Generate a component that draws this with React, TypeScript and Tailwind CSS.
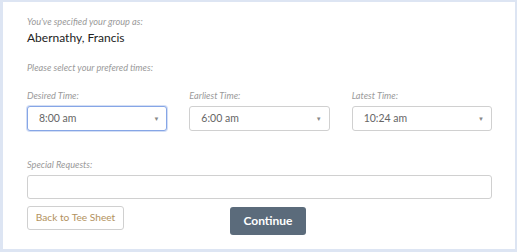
const times = [
  { label: "Desired Time:", value: "8:00 am", focused: true },
  { label: "Earliest Time:", value: "6:00 am", focused: false },
  { label: "Latest Time:", value: "10:24 am", focused: false },
];

function Label({ children }: { children: React.ReactNode }) {
  return <div className="text-[9.2px] italic leading-[12px] text-[#9a9a9a]">{children}</div>;
}

export default function App() {
  return (
    <div
      className="h-[252px] w-[517px] bg-[#dde5f3] pl-[3px] pr-[2px] pt-[2px] pb-[3px]"
      style={{ fontFamily: "Lato, 'Open Sans', sans-serif" }}
    >
      <div className="h-full w-full bg-white pl-[24px] pr-[23px] pt-[14px]">
        <Label>You've specified your group as:</Label>
        <div className="mt-[3px] text-[12px] leading-[14px] text-[#222]">Abernathy, Francis</div>
        <div className="mt-[17px]">
          <Label>Please select your prefered times:</Label>
        </div>

        <div className="mt-[16px] grid grid-cols-3 gap-x-[22px]">
          {times.map((t) => (
            <div key={t.label}>
              <Label>{t.label}</Label>
              <div
                className={`mt-[4px] flex h-[25px] items-center justify-between rounded-[3px] border bg-white pl-[11px] pr-[7px] text-[10.5px] text-[#666] ${
                  t.focused ? "border-[#86a6e6] shadow-[0_0_0_1px_#d3def5]" : "border-[#d0d0d0]"
                }`}
              >
                <span>{t.value}</span>
                <span className="text-[6px] leading-none text-[#888]">▼</span>
              </div>
            </div>
          ))}
        </div>

        <div className="mt-[28px]">
          <Label>Special Requests:</Label>
        </div>
        <div className="mt-[4px] h-[24px] rounded-[3px] border border-[#d0d0d0] bg-white" />

        <div className="mt-[7px] flex items-start">
          <button className="h-[24px] w-[97px] rounded-[3px] border border-[#d0d0d0] bg-white text-[10.2px] text-[#b3925e]">
            Back to Tee Sheet
          </button>
          <button className="ml-[106px] mt-[1px] h-[28px] w-[76px] rounded-[3px] bg-[#5b6b7b] text-[12px] font-bold text-white">
            Continue
          </button>
        </div>
      </div>
    </div>
  );
}
